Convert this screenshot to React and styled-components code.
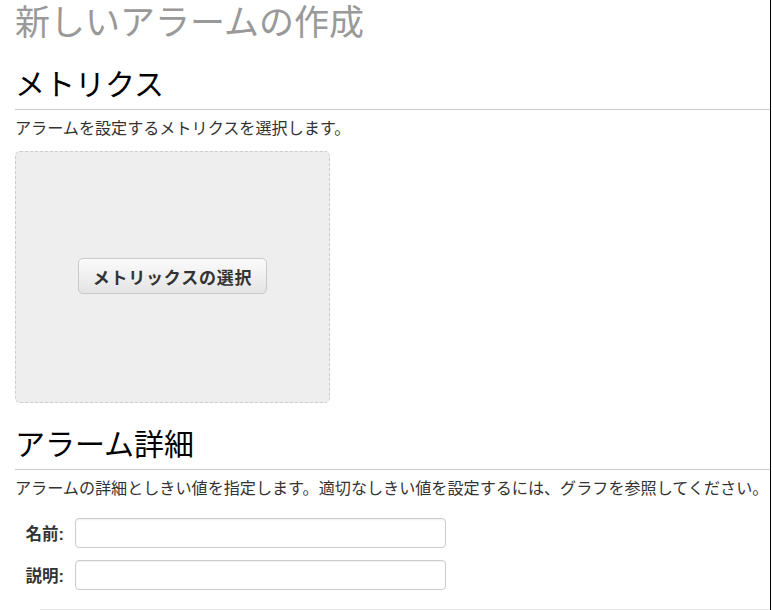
import React from "react";
import styled, { createGlobalStyle } from "styled-components";

const GlobalStyle = createGlobalStyle`
	html, body {
		margin: 0;
		padding: 0;
		background: #fff;
	}
	body {
		font-family: "Liberation Sans", "Noto Sans CJK JP", sans-serif;
		color: #333;
	}
`;

const Page = styled.div`
	width: 755px;
	height: 610px;
	padding-left: 15px;
	border-right: 1px solid #000;
	overflow: hidden;
`;

const Title = styled.h1`
	margin: 5px 0 0;
	font-size: 35px;
	line-height: 35px;
	font-weight: normal;
	color: #999;
	white-space: nowrap;
`;

const SectionTitle = styled.h2`
	margin: ${(p) => p.$top}px 0 0;
	padding-bottom: 9px;
	font-size: 30px;
	line-height: 30px;
	font-weight: normal;
	color: #000;
	border-bottom: 1px solid #ccc;
`;

const Description = styled.p`
	margin: 10px 0 0;
	font-size: 16.1px;
	line-height: 16px;
	color: #333;
	white-space: nowrap;
`;

const MetricDrop = styled.div`
	margin-top: 15px;
	width: 313px;
	height: 250px;
	background: #eee;
	border: 1px dashed #ccc;
	border-radius: 5px;
	display: flex;
	align-items: center;
	justify-content: center;
`;

const SelectButton = styled.button`
	height: 36px;
	padding: 0 14px;
	margin-top: -2px;
	font-family: inherit;
	font-size: 17px;
	font-weight: bold;
	letter-spacing: 0.8px;
	color: #333;
	background: linear-gradient(#fbfbfb, #e4e4e4);
	border: 1px solid #c9c9c9;
	border-radius: 5px;
	cursor: pointer;
`;

const Form = styled.div`
	margin-top: 22px;
	display: flex;
	flex-direction: column;
	gap: 12px;
`;

const Row = styled.div`
	display: flex;
	align-items: center;
	gap: 11px;
`;

const Label = styled.label`
	width: 49px;
	text-align: right;
	font-size: 16.5px;
	font-weight: bold;
	color: #333;
`;

const Input = styled.input`
	width: 371px;
	height: 30px;
	box-sizing: border-box;
	border: 1px solid #ccc;
	border-radius: 4px;
	box-shadow: inset 0 1px 2px rgba(0, 0, 0, 0.06);
	padding: 0 6px;
	font-family: inherit;
	font-size: 14px;
	outline: none;
`;

const Divider = styled.div`
	margin: 19px 0 0 25px;
	border-top: 1px solid #e8e8e8;
`;

export default function App() {
	return (
		<>
			<GlobalStyle />
			<Page>
				<Title>新しいアラームの作成</Title>

				<SectionTitle $top={30}>メトリクス</SectionTitle>
				<Description>アラームを設定するメトリクスを選択します。</Description>
				<MetricDrop>
					<SelectButton>メトリックスの選択</SelectButton>
				</MetricDrop>

				<SectionTitle $top={27}>アラーム詳細</SectionTitle>
				<Description>
					アラームの詳細としきい値を指定します。適切なしきい値を設定するには、グラフを参照してください。
				</Description>

				<Form>
					<Row>
						<Label>名前:</Label>
						<Input type="text" />
					</Row>
					<Row>
						<Label>説明:</Label>
						<Input type="text" />
					</Row>
				</Form>

				<Divider />
			</Page>
		</>
	);
}
